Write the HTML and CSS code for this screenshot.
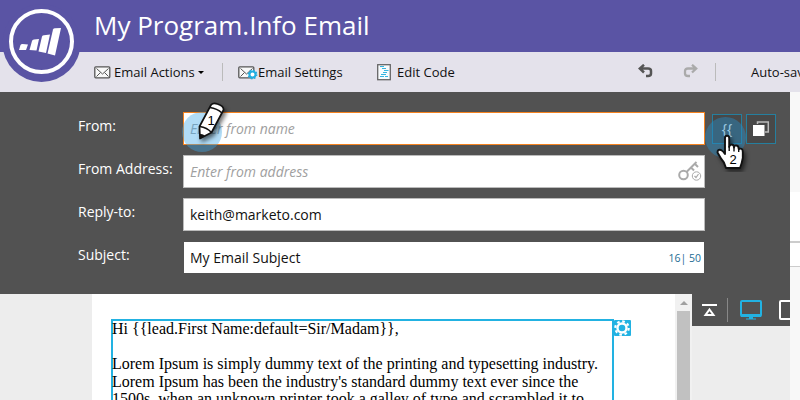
FILE: index.html
```html
<!DOCTYPE html>
<html lang="en">
<head>
<meta charset="utf-8">
<title>My Program.Info Email</title>
<link rel="stylesheet" href="styles.css">
</head>
<body>
<header class="header">
  <svg class="logo" width="80" height="82" viewBox="0 0 80 82">
    <circle cx="41.5" cy="43" r="39" fill="#5a54a4"/>
    <circle cx="41.5" cy="41.5" r="30.5" fill="none" stroke="#fff" stroke-width="4"/>
    <g fill="#fff">
      <path d="M20.500 45Q21 44 22.500 44L28 44.500L26 50L19 50Z"/>
      <path d="M32 41Q32.300 39.500 34 39.500L39 39L36.500 50.500L29.500 50Z"/>
      <path d="M42 36.500Q42.500 35.300 44 35.200L50 34.500L46 53L38.500 51.500Z"/>
      <path d="M53 29.500Q53.500 28.300 55 28.200L61 28L55 55.500L47.500 53.500Z"/>
    </g>
  </svg>
  <h1 class="title">My Program.Info Email</h1>
</header>
<nav class="toolbar">
  <button class="tool actions">
    <svg width="17" height="13" viewBox="0 0 17 13" fill="#f8f8f8" stroke="#555" stroke-width="1.300"><rect x=".8" y=".8" width="15" height="11" rx="1"/><path d="M2.500 2.500L8.500 8L14.500 2.500M2.500 10.500L6.500 6.500M14.500 10.500L10.500 6.500" fill="none" stroke-width="1"/></svg>
    <span>Email Actions</span><i class="caret"></i>
  </button>
  <i class="sep"></i>
  <button class="tool settings">
    <svg width="20" height="15" viewBox="0 0 20 15"><g fill="#f8f8f8" stroke="#555" stroke-width="1.300"><rect x=".8" y="1.800" width="15" height="11" rx="1"/><path d="M2.500 3.500L8.500 9L14.500 3.500M2.500 11.500L6.500 7.500" fill="none" stroke-width="1"/></g><g fill="none" stroke="#22aee0"><circle cx="14.500" cy="9.500" r="3" fill="#fff" stroke-width="2"/><circle cx="14.500" cy="9.500" r="4.200" stroke-width="1.400" stroke-dasharray="1.650 1.650"/></g></svg>
    <span>Email Settings</span>
  </button>
  <button class="tool code">
    <svg width="14" height="17" viewBox="0 0 14 17" fill="none"><rect x=".7" y=".7" width="12.600" height="15" fill="#f7fbfd" stroke="#666" stroke-width="1.300"/><path d="M3 2.500H7M5 4.500H9M7 6.500H11.500M6 8.500H10M4 10.500H9M3 12.500H7M8 12.500H11" stroke="#35b5df" stroke-width="1.200"/></svg>
    <span>Edit Code</span>
  </button>
  <svg class="undo" width="15" height="14" viewBox="0 0 15 14" fill="none" stroke="#555" stroke-width="2.500"><path d="M6 .8L1.800 4.500L6 8.500M2.500 4.500H10Q13 4.500 13 7V9.500Q13 12 10 12H8"/></svg>
  <svg class="redo" width="15" height="14" viewBox="0 0 15 14" fill="none" stroke="#aaa" stroke-width="2.300"><path d="M9 .8L13.200 4.500L9 8.500M12.500 4.500H5Q2 4.500 2 7V9.500Q2 12 5 12H7"/></svg>
  <i class="sep"></i>
  <span class="autosave">Auto-saved</span>
</nav>
<main class="workspace">
  <section class="editor">
    <form class="fields">
      <div class="row">
        <label>From:</label>
        <div class="input active placeholder">Enter from name
          <svg class="pencil" width="60" height="62" viewBox="180 95 60 62"><circle cx="202" cy="132" r="20" fill="#3ba7e8" opacity=".4"/><path class="shadow" d="M200 138.500L199.500 126.500L211 105Q213 102.500 217.500 104Q224 106 223.500 110L211.500 132.500Z" fill="#fff" stroke="#111" stroke-width="1.700" stroke-linejoin="round"/><path d="M199.800 126.500Q207 127.500 211.500 132.500M210 107.500Q217 108.500 222 113" fill="none" stroke="#111" stroke-width="1.600"/><path d="M200 139V134Q203 133.500 205 136Z" fill="#111"/><text x="207.500" y="124.500" font-size="13">1</text></svg>
        </div>
        <span class="token">{{</span>
        <span class="copy"><svg width="18" height="16" viewBox="0 0 18 16"><path d="M5.500 3V1H16.300V11H13" fill="none" stroke="#bbb" stroke-width="1.500"/><path d="M1 4H12.500V15H1Z" fill="#fff"/></svg></span>
        <svg class="hand" width="60" height="62" viewBox="700 110 60 62"><circle cx="725.500" cy="137.500" r="20.500" fill="#258bc5" opacity=".45"/><path class="shadow" d="M725 153V138Q725 135.800 727 135.800Q729.200 135.800 729.200 138V147Q729.500 144.500 731.500 144.500Q734 144.500 734 147.500Q734.500 145 736.500 145.500Q738.700 145.800 738.700 149Q742.800 147.500 742.800 152V158Q742 163 740 168H726Q724.500 162 721 158.500L717.500 152.500Q717.500 149 721 150Q723 151 725 154Z" fill="#fff" stroke="#111" stroke-width="1.900" stroke-linejoin="round"/><path d="M729.200 146V151M734 147V151.500M738.700 148V152" stroke="#111" stroke-width="1.400"/><text x="729.500" y="163.500" font-size="13">2</text></svg>
      </div>
      <div class="row">
        <label>From Address:</label>
        <div class="input placeholder">Enter from address
          <svg class="key" width="24" height="22" viewBox="0 0 24 22" fill="none" stroke="#aaa"><circle cx="5.500" cy="15" r="4.300" stroke-width="2"/><path d="M8.500 12L18.500 2M13 7.500L16 10.500M16.500 3.500L20 7" stroke-width="2"/><circle cx="18.500" cy="16" r="4.200" stroke-width="1"/><path d="M16.500 16L18 17.500L20.500 14" stroke-width="1.200"/></svg>
        </div>
      </div>
      <div class="row"><label>Reply-to:</label><div class="input">keith@marketo.com</div></div>
      <div class="row"><label>Subject:</label><div class="input subject">My Email Subject<span class="count">16| 50</span></div></div>
    </form>
    <div class="lower">
      <div class="preview">
        <article class="module">Hi {{lead.First Name:default=Sir/Madam}},<br><br>Lorem Ipsum is simply dummy text of the printing and typesetting industry.<br>Lorem Ipsum has been the industry's standard dummy text ever since the<br>1500s, when an unknown printer took a galley of type and scrambled it to</article>
        <svg class="gear" width="17" height="16" viewBox="0 0 17 16"><rect width="17" height="16" rx="1" fill="#22b2e2"/><g fill="none" stroke="#fff"><circle cx="8" cy="8" r="4.500" stroke-width="2.400"/><circle cx="8" cy="8" r="6.700" stroke-width="2.200" stroke-dasharray="2.630 2.630"/></g></svg>
      </div>
      <div class="scroll"><i class="up"></i><i class="thumb"></i></div>
      <div class="views">
        <svg width="98" height="32" viewBox="692 294 98 32" fill="none"><path d="M702 305H717" stroke="#fff" stroke-width="2"/><path d="M709.500 309.500L713.500 315H705.500Z" stroke="#fff" stroke-width="2"/><path d="M727.500 298V322" stroke="#888"/><rect x="741" y="301" width="20" height="15" rx="1" stroke="#22b2e2" stroke-width="2"/><path d="M741 315.500H761" stroke="#22b2e2" stroke-width="3"/><path d="M749 317H753V318.500H756V319.500H746V318.500H749Z" fill="#22b2e2"/><rect x="780" y="301" width="15" height="18" rx="1" stroke="#fff" stroke-width="2"/></svg>
      </div>
    </div>
  </section>
  <aside class="rail"><i class="r1"></i><i class="r2"></i><i class="r3"></i></aside>
</main>
</body>
</html>
```
FILE: styles.css
```css
* { box-sizing: border-box; }
body { margin: 0; width: 800px; height: 400px; overflow: hidden; font: 13px "Open Sans", sans-serif; color: #111; display: flex; flex-direction: column; }
.header { height: 52px; flex: none; background: #5a54a4; position: relative; padding-left: 94px; }
.logo { position: absolute; left: 0; top: 0; z-index: 2; }
.title { margin: 0; color: #fff; font-size: 26px; font-weight: 400; line-height: 50px; white-space: nowrap; }
.toolbar { height: 40px; flex: none; background: #e4e2eb; padding-left: 94px; display: flex; align-items: center; white-space: nowrap; overflow: hidden; }
.toolbar > * { flex: none; }
.tool { border: 0; background: none; padding: 0; font: inherit; color: inherit; display: flex; align-items: center; }
.actions { width: 128px; }
.actions span { margin-left: 3px; }
.caret { border: 3px solid transparent; border-top-color: #000; border-bottom: 0; margin-left: 3px; }
.sep { width: 1px; height: 18px; background: #bbb; }
.settings { margin-left: 15px; width: 139px; }
.code { width: 261px; }
.code span { margin-left: 6px; }
.undo, .redo { position: relative; top: -1px; }
.redo { margin: 0 17px 0 30px; }
.autosave { margin-left: 35px; }
.workspace { flex: 1; display: flex; min-height: 0; overflow: hidden; }
.editor { width: 790px; display: flex; flex-direction: column; }
.fields { height: 202px; flex: none; background: #525252; padding: 20px 0 0 78px; }
.row { display: flex; height: 43px; position: relative; font-size: 14px; }
.row label { width: 105px; color: #fff; line-height: 28px; white-space: nowrap; }
.input { width: 522px; height: 33px; border: 1px solid #bbb; background: #fff; padding: 0 6px; line-height: 32px; position: relative; }
.active { border-color: #f4821f; }
.placeholder { color: #a0a0a0; font-style: italic; }
.subject { border-color: #525252; }
.count { position: absolute; right: 3px; top: 0; font-size: 10.5px; color: #246b93; }
.token, .copy { width: 30px; height: 30px; margin: 2px 0 0 7px; border: 1px solid #257f9f; background: #484848; display: flex; align-items: center; justify-content: center; color: #fff; font-size: 14px; }
.token { padding-bottom: 1px; }
.copy { margin-left: 4px; }
.pencil, .hand { position: absolute; z-index: 2; font: 13px "Liberation Sans", sans-serif; }
.pencil { left: -4px; top: -18px; }
.hand { left: 622px; top: -2px; }
.shadow { filter: drop-shadow(2px 3px 2px rgba(0,0,0,.55)); }
.key { position: absolute; right: 2px; top: 4px; }
.lower { flex: 1; display: flex; align-items: flex-start; background: #ededed; padding-left: 92px; min-height: 0; }
.preview { width: 583px; height: 106px; background: #fff; padding: 25px 0 0 19px; display: flex; align-items: flex-start; overflow: hidden; }
.module { width: 503px; height: 120px; border: 1px solid #22b2e2; box-shadow: inset 0 0 0 1px #22b2e2; font: 16px/17.6px "Liberation Serif", serif; white-space: nowrap; flex: none; color: #000; }
.gear { flex: none; margin-top: 1px; }
.scroll { width: 17px; height: 106px; background: #f1f1f1; padding: 7px 2px 0; display: flex; flex-direction: column; align-items: center; }
.up { border: 4px solid transparent; border-bottom-color: #a0a0a0; border-top: 0; }
.thumb { width: 13px; flex: 1; background: #c1c1c1; margin-top: 6px; }
.views { width: 98px; height: 32px; background: #525252; }
.views svg { display: block; }
.rail { width: 10px; background: #f8f8f8; display: flex; flex-direction: column; padding-top: 100px; }
.r1 { height: 51px; background: #fff; border-bottom: 2px solid #ccc; }
.r2 { height: 24px; background: #fff; border-bottom: 1px solid #ccc; }
.r3 { flex: 1; }
```
